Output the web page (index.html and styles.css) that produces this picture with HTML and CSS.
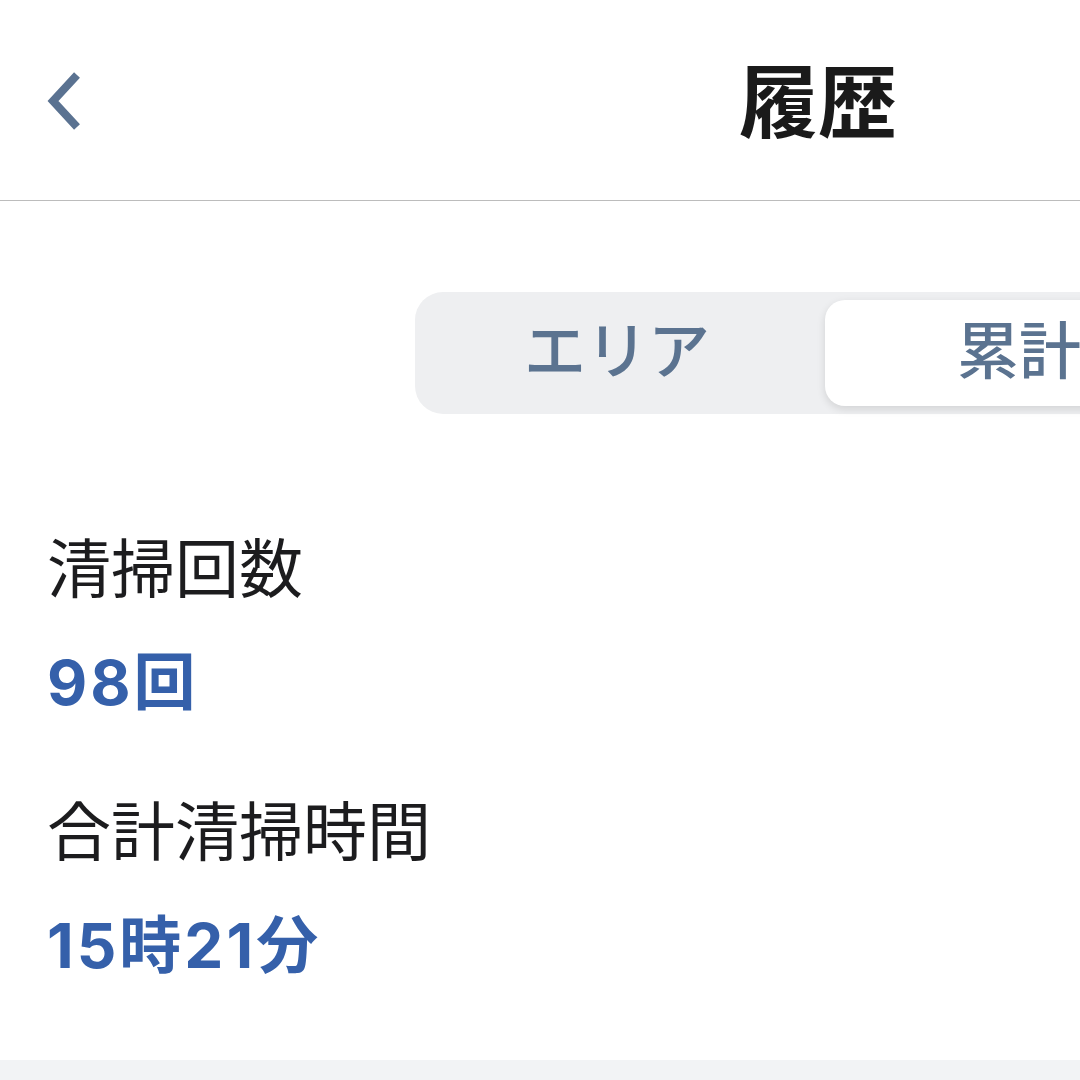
FILE: index.html
```html
<!DOCTYPE html>
<html lang="ja">
<head>
<meta charset="utf-8">
<title>履歴</title>
<link rel="stylesheet" href="styles.css">
</head>
<body>
<div class="screen">
  <header class="nav">
    <div class="nav-left">
      <button class="back" aria-label="戻る">
        <svg width="44" height="64" viewBox="0 0 44 64"><path d="M33 6 L9 32 L33 58" fill="none" stroke="#5a7291" stroke-width="8" stroke-linecap="butt" stroke-linejoin="miter"/></svg>
      </button>
    </div>
    <h1 class="title">履歴</h1>
    <div class="nav-right"></div>
  </header>
  <main class="content">
    <div class="segmented">
      <div class="segment">エリア</div>
      <div class="segment selected">累計</div>
    </div>
    <section class="stats">
      <div class="label">清掃回数</div>
      <div class="value">98回</div>
      <div class="label second">合計清掃時間</div>
      <div class="value">15時21分</div>
    </section>
  </main>
  <div class="footer-band"></div>
</div>
</body>
</html>
```

FILE: styles.css
```css
html, body {
  margin: 0;
  padding: 0;
  background: #ffffff;
  overflow: hidden;
  width: 1080px;
  height: 1080px;
}

.screen {
  width: 1636px;
  height: 1080px;
  display: flex;
  flex-direction: column;
  font-family: Inter, "Noto Sans CJK JP", sans-serif;
}

.nav {
  height: 200px;
  border-bottom: 1px solid #bcbcbc;
  display: grid;
  grid-template-columns: 1fr auto 1fr;
  align-items: center;
}

.nav-left {
  padding-left: 44px;
  padding-top: 2px;
  display: flex;
  align-items: center;
}

.back {
  border: 0;
  background: none;
  padding: 0;
  display: flex;
}

.title {
  margin: 0;
  padding-bottom: 6px;
  font-family: "Noto Sans CJK JP", sans-serif;
  font-size: 79px;
  font-weight: 700;
  color: #1a1a1a;
  line-height: 1;
}

.content {
  flex: 1;
  display: flex;
  flex-direction: column;
}

.segmented {
  align-self: center;
  margin-top: 91px;
  width: 806px;
  height: 122px;
  box-sizing: border-box;
  padding: 8px;
  background: #eeeff1;
  border-radius: 28px;
  display: grid;
  grid-template-columns: 1fr 1fr;
  gap: 14px;
}

.segment {
  display: flex;
  align-items: center;
  justify-content: center;
  padding-bottom: 12px;
  box-sizing: border-box;
  font-family: "Noto Sans CJK JP", sans-serif;
  font-size: 62px;
  font-weight: 500;
  color: #5b7390;
  border-radius: 20px;
}

.segment.selected {
  background: #ffffff;
  box-shadow: 0 3px 8px rgba(0, 0, 0, 0.12);
}

.stats {
  margin-top: 98px;
  padding-left: 47px;
  display: flex;
  flex-direction: column;
}

.label {
  font-family: "Noto Sans CJK JP", sans-serif;
  font-size: 64px;
  font-weight: 400;
  color: #1c1c1e;
  line-height: 104px;
  height: 114px;
}

.label.second {
  margin-top: 35px;
}

.value {
  font-size: 62px;
  font-weight: 700;
  letter-spacing: 3px;
  color: #3560aa;
  line-height: 114px;
  height: 114px;
}

.footer-band {
  height: 20px;
  background: #f2f3f5;
}
```
